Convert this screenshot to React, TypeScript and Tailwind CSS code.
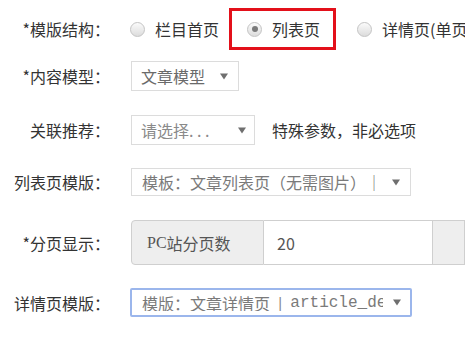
import React from "react";

const font = { fontFamily: '"Noto Sans CJK SC", "Microsoft YaHei", sans-serif' };

function Radio({ checked }: { checked?: boolean }) {
  return (
    <span className="flex h-[15px] w-[15px] shrink-0 items-center justify-center rounded-full border border-[#c4c4c4] bg-[linear-gradient(#fbfbfb,#dcdcdc)]">
      {checked && <span className="h-[6px] w-[6px] rounded-full bg-[#7a7a7a]" />}
    </span>
  );
}

function Arrow() {
  return (
    <svg width="8" height="7" viewBox="0 0 8 7" className="shrink-0">
      <path d="M0 0.5 L8 0.5 L4 6.5 Z" fill="#6f6f6f" />
    </svg>
  );
}

function Label({ children }: { children: React.ReactNode }) {
  return (
    <div className="w-[110px] shrink-0 text-right text-[16px] leading-none text-[#333]">{children}</div>
  );
}

export default function App() {
  return (
    <div className="h-[339px] w-[465px] overflow-hidden bg-white pt-[8px]" style={font}>
      {/* Row 1 */}
      <div className="flex h-[42px] items-center">
        <Label>*模版结构：</Label>
        <div className="ml-[20px] flex items-center text-[16px] leading-none text-[#333]">
          <Radio />
          <span className="ml-[10px] whitespace-nowrap">栏目首页</span>
        </div>
        <div className="ml-[10px] flex h-[42px] w-[107px] shrink-0 items-center border-[3px] border-[#e3101a] pl-[15px] text-[16px] leading-none text-[#333]">
          <Radio checked />
          <span className="ml-[10px] whitespace-nowrap">列表页</span>
        </div>
        <div className="ml-[21px] flex items-center whitespace-nowrap text-[16px] leading-none text-[#333]">
          <Radio />
          <span className="ml-[10px]">详情页(单页)</span>
        </div>
      </div>

      {/* Row 2 */}
      <div className="mt-[11px] flex h-[30px] items-center">
        <Label>*内容模型：</Label>
        <div className="ml-[21px] flex h-[30px] w-[108px] items-center border border-[#dcdcdc] pl-[9px] pr-[10px] text-[16px] leading-none text-[#6a6a6a]">
          <span className="whitespace-nowrap">文章模型</span>
          <span className="ml-auto"><Arrow /></span>
        </div>
      </div>

      {/* Row 3 */}
      <div className="mt-[24px] flex h-[30px] items-center">
        <Label>关联推荐：</Label>
        <div className="ml-[21px] flex h-[30px] w-[124px] items-center border border-[#dcdcdc] pl-[9px] pr-[8px] text-[16px] leading-none text-[#8a8a8a]">
          <span className="whitespace-nowrap">请选择. . .</span>
          <span className="ml-auto"><Arrow /></span>
        </div>
        <span className="ml-[17px] whitespace-nowrap text-[16px] leading-none text-[#333]">特殊参数，非必选项</span>
      </div>

      {/* Row 4 */}
      <div className="mt-[23px] flex h-[28px] items-center">
        <Label>列表页模版：</Label>
        <div className="ml-[21px] flex h-[28px] w-[280px] items-center border border-[#dcdcdc] pl-[10px] pr-[10px] text-[16px] leading-none text-[#7a7a7a]">
          <span className="whitespace-nowrap">模板：文章列表页（无需图片）｜</span>
          <span className="ml-auto"><Arrow /></span>
        </div>
      </div>

      {/* Row 5 */}
      <div className="mt-[24px] flex h-[45px] items-center">
        <Label>*分页显示：</Label>
        <div className="ml-[21px] flex h-[45px] flex-1 items-stretch">
          <div className="flex w-[133px] items-center rounded-l-[4px] border border-[#cfcfcf] bg-[#eeeeee] pl-[15px] text-[16px] leading-none text-[#555]">
            <span style={{ fontFamily: '"Liberation Serif", serif' }}>PC</span>
            <span>站分页数</span>
          </div>
          <div className="flex w-[168px] items-center border-y border-[#cfcfcf] bg-white pl-[13px] text-[16px] leading-none text-[#555]">
            20
          </div>
          <div className="flex-1 border border-[#cfcfcf] bg-[#eeeeee]" />
        </div>
      </div>

      {/* Row 6 */}
      <div className="mt-[23px] flex h-[29px] items-center">
        <Label>详情页模版：</Label>
        <div className="ml-[20px] flex h-[29px] w-[282px] items-center rounded-[2px] border-2 border-[#9bb6ec] pl-[10px] pr-[9px] text-[16px] leading-none text-[#7a7a7a]">
          <div className="flex w-[241px] items-center overflow-hidden whitespace-nowrap">
            <span>模版：文章详情页</span>
            <span className="ml-[8px]">|</span>
            <span className="ml-[8px]" style={{ fontFamily: '"Liberation Mono", monospace' }}>article_detail</span>
          </div>
          <span className="ml-auto"><Arrow /></span>
        </div>
      </div>
    </div>
  );
}
